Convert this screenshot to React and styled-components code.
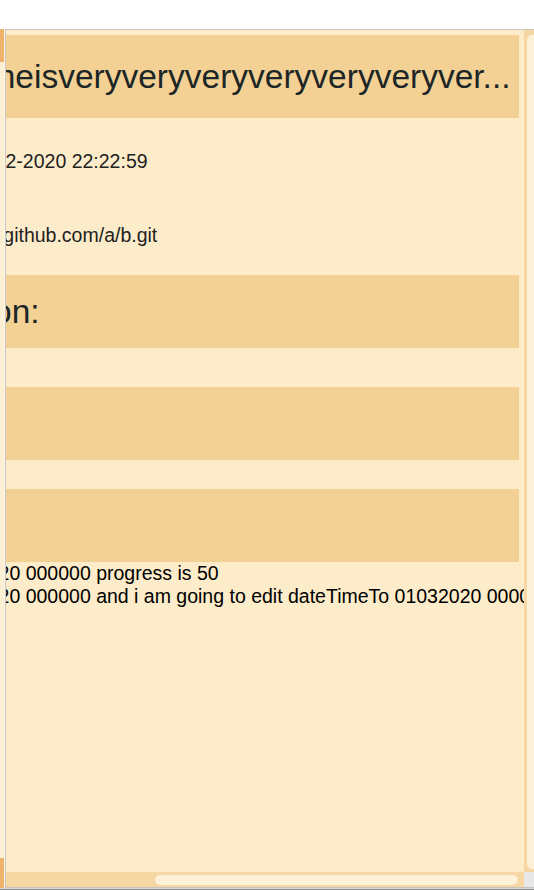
import React, { useLayoutEffect, useRef } from "react";
import styled, { createGlobalStyle } from "styled-components";

const GlobalStyle = createGlobalStyle`
  html, body {
    margin: 0;
    padding: 0;
    background: #fff;
    overflow: hidden;
  }
  body {
    font-family: "Liberation Sans", Arial, sans-serif;
  }
`;

const project = {
  name: "myprojectnameisveryveryveryveryveryveryveryveryveryverylong",
  created: "01-02-2020 22:22:59",
  repo: "https://github.com/a/b.git",
  logs: [
    "dateTimeFrom 01022020 000000 progress is 50",
    "dateTimeFrom 01022020 000000 and i am going to edit dateTimeTo 01032020 000000",
  ],
};

//LONG NAMES ARE CUT
const shorten = (text, max) => (text.length > max ? text.slice(0, max) + "..." : text);

const App = () => {
  const areaRef = useRef(null);

  // the details are shown scrolled all the way to the right
  useLayoutEffect(() => {
    const el = areaRef.current;
    if (el) el.scrollLeft = el.scrollWidth;
  }, []);

  return (
    <Page>
      <GlobalStyle />
      <Workspace>
        <SideEdge>
          <EdgeCap $height={33} />
          <EdgeCap $height={30} />
        </SideEdge>
        <Panel>
          <ScrollArea ref={areaRef}>
            <Content>
              <Band $main>{shorten(project.name, 42)}</Band>
              <InfoList>
                <InfoRow>Date of creation: {project.created}</InfoRow>
                <InfoRow>Git repository: {project.repo}</InfoRow>
              </InfoList>
              <Band>Full description:</Band>
              <SectionBody $space={39} />
              <Band>Tags:</Band>
              <SectionBody $space={29} />
              <Band>Logs:</Band>
              <LogBox>
                {project.logs.map((line, key) => (
                  <LogLine key={key}>{line}</LogLine>
                ))}
              </LogBox>
            </Content>
          </ScrollArea>
          <VTrack>
            <Thumb />
          </VTrack>
          <HTrack>
            <Thumb $width={363} />
          </HTrack>
          <Corner />
        </Panel>
      </Workspace>
      <Footer>01 02 2020 00 00 00 0000 00 00 00</Footer>
    </Page>
  );
};

export default App;

//LAYOUT

const Page = styled.div`
  width: 534px;
  height: 891px;
  overflow: hidden;
  padding-top: 29px;
  box-sizing: border-box;
`;

const Workspace = styled.div`
  display: flex;
  align-items: stretch;
`;

const SideEdge = styled.div`
  flex: 0 0 5px;
  box-sizing: border-box;
  border-right: 1px solid #fef6e6;
  display: flex;
  flex-direction: column;
  justify-content: space-between;
  background: #fdefd4;
`;

const EdgeCap = styled.div`
  height: ${(p) => p.$height}px;
  background: #f0b36b;
`;

const Panel = styled.div`
  flex: 0 0 535px;
  height: 859px;
  box-sizing: border-box;
  border: 1px solid #c9c4bc;
  background: #fdecca;
  display: grid;
  grid-template-columns: 1fr 15px;
  grid-template-rows: 1fr 15px;
`;

const ScrollArea = styled.div`
  overflow: hidden;
  min-width: 0;
  min-height: 0;
`;

//SCROLLBARS

const VTrack = styled.div`
  background: #f6d6a3;
  padding: 5px 0 3px 3px;
  display: flex;
  flex-direction: column;
`;

const HTrack = styled.div`
  background: #f6d6a3;
  padding: 3px 6px 2px 3px;
  display: flex;
  justify-content: flex-end;
`;

const Thumb = styled.div`
  flex: ${(p) => (p.$width ? `0 0 ${p.$width}px` : "1")};
  background: #fdf2d9;
  border-radius: 5px;
`;

const Corner = styled.div`
  background: #e8e8e8;
`;

const Content = styled.div`
  width: 727px;
  box-sizing: border-box;
  padding: 5px 0 0 5px;
`;

//DETAILS

const Band = styled.h2`
  margin: 0 5px 0 0;
  padding: ${(p) => (p.$main ? "23px 3px" : "18px 3px")};
  background: #f3d194;
  color: #1c2626;
  font-size: 33.5px;
  font-weight: normal;
  line-height: 37px;
  white-space: nowrap;
  overflow: hidden;
`;

const InfoList = styled.div`
  display: flex;
  flex-direction: column;
  gap: 52px;
  padding: 32px 16px 29px;
`;

const InfoRow = styled.p`
  margin: 0;
  font-size: 19.5px;
  line-height: 22px;
  color: #222;
  white-space: nowrap;
`;

const SectionBody = styled.div`
  height: ${(p) => p.$space}px;
`;

const LogBox = styled.div`
  overflow: hidden;
  white-space: nowrap;
  font-size: 19.5px;
  line-height: 23px;
  color: #000;
`;

const LogLine = styled.div``;

const Footer = styled.div`
  border-top: 1px solid #d6d6d6;
  box-shadow: inset 0 1px 0 #8f8f8f;
  padding: 2px 0 0 150px;
  font-size: 16px;
  line-height: 20px;
  color: #444;
  white-space: nowrap;
`;
